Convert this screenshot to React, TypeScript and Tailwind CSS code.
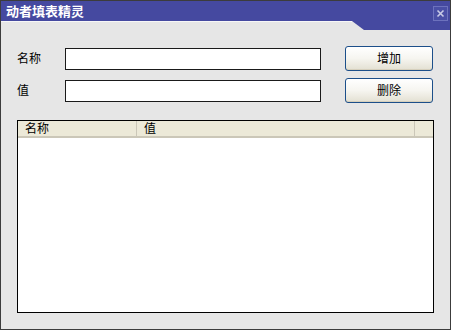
const cjk = { fontFamily: '"Liberation Sans", "Noto Sans CJK SC", sans-serif' };

function XpButton({ label }: { label: string }) {
  return (
    <button
      className="w-[88px] h-[25px] rounded-[3px] border border-[#1c4f8a] bg-gradient-to-b from-white via-[#f6f5f0] to-[#e3e0d2] text-[12px] text-black flex items-center justify-center shadow-[inset_0_-1px_0_#d6d0bd]"
      style={cjk}
    >
      {label}
    </button>
  );
}

export default function App() {
  return (
    <div className="w-[451px] h-[330px] border border-[#3c3c3c] bg-[#e6e6e6] flex flex-col" style={cjk}>
      {/* Title bar */}
      <div className="h-[20px] bg-[#4549a0] flex items-center justify-between pl-[5px] pr-[2px]">
        <span className="text-white font-bold text-[13px] leading-none">动者填表精灵</span>
        <div className="w-[15px] h-[15px] border border-[#6d72bd] bg-[#4a4fa6] flex items-center justify-center mt-[4px]">
          <svg width="9" height="9" viewBox="0 0 9 9">
            <path d="M1.5 1.5L7.5 7.5M7.5 1.5L1.5 7.5" stroke="#c9cbe6" strokeWidth="1.6" />
          </svg>
        </div>
      </div>
      <div className="h-[9px] flex">
        <div className="flex-1 border-t border-[#f7f7f7]" />
        <div className="w-[98px] bg-[#4549a0] [clip-path:polygon(0_0,100%_0,100%_100%,12px_100%)]" />
      </div>

      {/* Form */}
      <div className="flex flex-col gap-[7px] pl-[16px] pr-[16px] mt-[16px]">
        <div className="flex items-center h-[25px]">
          <span className="w-[48px] text-[12px] text-black">名称</span>
          <input className="w-[256px] h-[22px] border border-[#1a1a1a] bg-white outline-none" />
          <div className="ml-[24px]">
            <XpButton label="增加" />
          </div>
        </div>
        <div className="flex items-center h-[25px]">
          <span className="w-[48px] text-[12px] text-black">值</span>
          <input className="w-[256px] h-[22px] border border-[#1a1a1a] bg-white outline-none" />
          <div className="ml-[24px]">
            <XpButton label="删除" />
          </div>
        </div>
      </div>

      {/* List */}
      <div className="mx-[16px] mt-[17px] h-[193px] border border-black bg-white flex flex-col">
        <div className="h-[17px] bg-[#ece9d8] border-b-2 border-[#cbc7b8] flex text-[12px] text-black">
          <div className="w-[119px] pl-[7px] border-r border-[#cbc7b8] flex items-center leading-none">名称</div>
          <div className="w-[278px] pl-[7px] border-r border-[#cbc7b8] flex items-center leading-none">值</div>
          <div className="flex-1" />
        </div>
      </div>
    </div>
  );
}
